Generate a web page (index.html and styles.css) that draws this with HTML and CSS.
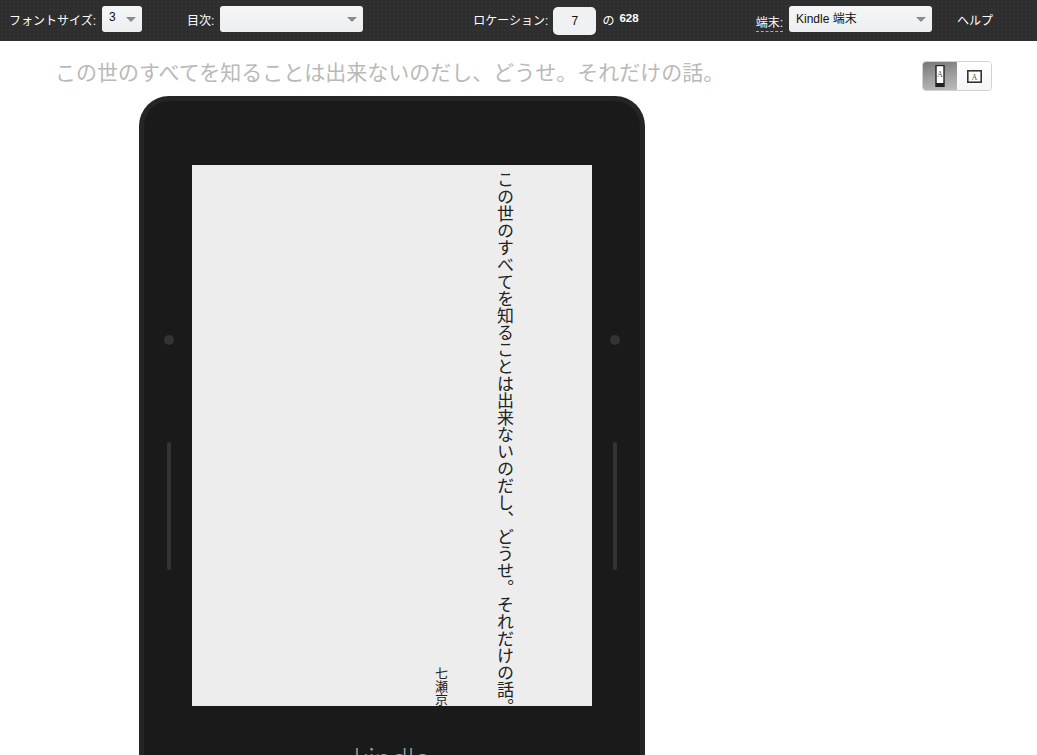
FILE: index.html
```html
<!DOCTYPE html>
<html lang="ja">
<head>
<meta charset="utf-8">
<title>Kindle プレビュー</title>
<link rel="stylesheet" href="styles.css">
</head>
<body>
<header class="toolbar">
  <div class="group group-font">
    <span class="label">フォントサイズ:</span>
    <div class="select select-font"><span>3</span><i class="arrow"></i></div>
  </div>
  <div class="group group-toc">
    <span class="label">目次:</span>
    <div class="select select-toc"><span></span><i class="arrow"></i></div>
  </div>
  <div class="group group-loc">
    <span class="label">ロケーション:</span>
    <div class="loc-input">7</div>
    <span class="label loc-of">の</span>
    <b class="loc-total">628</b>
  </div>
  <div class="group group-device">
    <span class="label label-device">端末:</span>
    <div class="select select-device"><span>Kindle 端末</span><i class="arrow"></i></div>
  </div>
  <span class="label help">ヘルプ</span>
</header>
<main class="main">
  <div class="title-row">
    <h1 class="title">この世のすべてを知ることは出来ないのだし、どうせ。それだけの話。</h1>
    <div class="toggle">
      <div class="seg seg-on">
        <svg width="10" height="22" viewBox="0 0 10 22"><rect x="1" y="0.5" width="8" height="21" fill="#fff" stroke="#222" stroke-width="1.4"/><rect x="1" y="18" width="8" height="3.5" fill="#222"/><text x="5" y="12" class="icon-a">A</text></svg>
      </div>
      <div class="seg seg-off">
        <svg width="15" height="13" viewBox="0 0 15 13"><rect x="0.8" y="0.8" width="13.4" height="11.4" fill="#fff" stroke="#333" stroke-width="1.6"/><text x="7.5" y="9.5" class="icon-a">A</text></svg>
      </div>
    </div>
  </div>
  <section class="device">
    <div class="side side-left"><i class="dot"></i><i class="slot"></i></div>
    <div class="center">
      <div class="screen">
        <p class="book-title">この世のすべてを知ることは出来ないのだし、どうせ。それだけの話。</p>
        <p class="book-author">七瀬京</p>
      </div>
      <div class="logo">kindle</div>
    </div>
    <div class="side side-right"><i class="dot"></i><i class="slot"></i></div>
  </section>
</main>
</body>
</html>
```
FILE: styles.css
```css
html, body {
  margin: 0;
  padding: 0;
  height: 755px;
  overflow: hidden;
  background: #fff;
  font-family: "Liberation Sans", "Noto Sans CJK JP", sans-serif;
}
.toolbar {
  display: flex;
  align-items: center;
  height: 41px;
  padding: 0 0 3px 9px;
  box-sizing: border-box;
  background-color: #2e2e2e;
  background-image: radial-gradient(circle, #343434 0.6px, transparent 1px);
  background-size: 4px 4px;
  color: #fff;
}
.group {
  display: flex;
  align-items: center;
  gap: 6px;
}
.label {
  font-size: 12px;
  color: #fff;
  white-space: nowrap;
}
.label-device {
  padding: 3px 0 1px;
  margin-top: 3px;
  border-bottom: 1px dashed #f0a030;
}
.select {
  box-sizing: border-box;
  display: flex;
  align-items: center;
  justify-content: space-between;
  height: 26px;
  padding: 0 6px 4px 7px;
  background: linear-gradient(#f5f6f7, #eceef0);
  border-radius: 3px;
  font-size: 12px;
  color: #111;
}
.arrow {
  width: 0;
  height: 0;
  border-left: 5.5px solid transparent;
  border-right: 5.5px solid transparent;
  border-top: 5px solid #8b8b8b;
  margin-top: 4px;
}
.select-font { width: 40px; }
.select-toc { width: 143px; }
.select-device { width: 143px; }
.group-toc { margin-left: 45px; }
.group-loc { margin-left: 110px; gap: 5px; }
.group-device { margin-left: 117px; }
.help { margin-left: 25px; }
.loc-input {
  box-sizing: border-box;
  width: 43px;
  height: 28px;
  line-height: 28px;
  text-align: center;
  margin-top: 3px;
  margin-right: 1px;
  background: #f0f1f3;
  border-radius: 5px;
  font-size: 12px;
  color: #111;
}
.loc-total {
  font-size: 11.5px;
  font-weight: bold;
  margin-top: -3px;
}
.main { display: flow-root; }
.title-row {
  display: flex;
  justify-content: space-between;
  align-items: flex-start;
  height: 55px;
  padding: 0 45px 0 55px;
}
.title {
  margin: 15px 0 0;
  font-size: 21px;
  line-height: 34px;
  font-weight: normal;
  color: #b9b9b9;
  white-space: nowrap;
  height: 34px;
}
.toggle {
  display: flex;
  margin-top: 20px;
  width: 70px;
  height: 30px;
  box-sizing: border-box;
  border: 1px solid #d2d2d2;
  border-radius: 4px;
  overflow: hidden;
}
.seg {
  flex: 1;
  display: flex;
  align-items: center;
  justify-content: center;
}
.seg-off {
  background: linear-gradient(#fff, #f6f6f6);
}
.seg-on {
  background: linear-gradient(170deg, #777, #a0a0a0 55%, #bcbcbc);
}
.icon-a {
  font-family: "Liberation Serif", serif;
  font-size: 8px;
  text-anchor: middle;
  fill: #555;
}
.device {
  display: grid;
  grid-template-columns: 48px 400px 48px;
  width: 506px;
  height: 900px;
  box-sizing: border-box;
  margin-left: 139px;
  background: #1a1a1a;
  border: 5px solid #252525;
  border-bottom: 0;
  border-radius: 30px 30px 0 0;
}
.side {
  display: flex;
  flex-direction: column;
  align-items: center;
  padding-top: 234px;
}
.side-left { padding-left: 2px; }
.side-right { padding-right: 2px; }
.dot {
  width: 10px;
  height: 10px;
  border-radius: 50%;
  background: #333;
}
.slot {
  width: 4px;
  height: 128px;
  margin-top: 97px;
  border-radius: 2px;
  background: #333;
}
.center { padding-top: 64px; }
.screen {
  display: flex;
  flex-direction: row-reverse;
  justify-content: flex-start;
  box-sizing: border-box;
  height: 541px;
  padding-right: 79px;
  background: #ededed;
  overflow: hidden;
  color: #222;
}
.book-title {
  margin: 0;
  padding-top: 6px;
  font-size: 17px;
  line-height: 20px;
  white-space: nowrap;
  writing-mode: vertical-rl;
}
.book-author {
  margin: 0 43px 0 0;
  font-size: 13px;
  line-height: 20px;
  align-self: flex-end;
  white-space: nowrap;
  writing-mode: vertical-rl;
}
.logo {
  margin-top: 31px;
  text-align: center;
  font-family: Lato, sans-serif;
  font-weight: 300;
  font-size: 30px;
  line-height: 40px;
  color: #a0a0a0;
}
```
